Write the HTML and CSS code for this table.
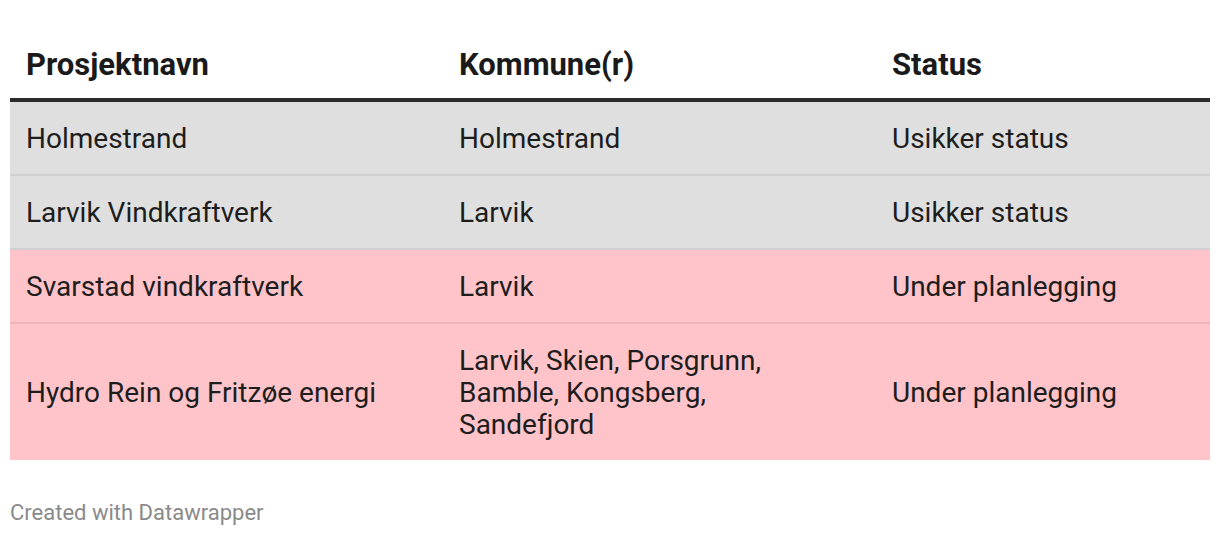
FILE: index.html
```html
<!DOCTYPE html>
<html lang="no">
<head>
<meta charset="utf-8">
<title>Vindkraftprosjekter</title>
<link rel="stylesheet" href="styles.css">
</head>
<body>
<div class="chart">
  <table class="dw-table">
    <colgroup>
      <col class="c1"><col class="c2"><col class="c3">
    </colgroup>
    <thead>
      <tr><th>Prosjektnavn</th><th>Kommune(r)</th><th>Status</th></tr>
    </thead>
    <tbody>
      <tr class="gray"><td>Holmestrand</td><td>Holmestrand</td><td>Usikker status</td></tr>
      <tr class="gray"><td>Larvik Vindkraftverk</td><td>Larvik</td><td>Usikker status</td></tr>
      <tr class="pink"><td>Svarstad vindkraftverk</td><td>Larvik</td><td>Under planlegging</td></tr>
      <tr class="pink last"><td>Hydro Rein og Fritzøe energi</td><td class="narrow">Larvik, Skien, Porsgrunn, Bamble, Kongsberg, Sandefjord</td><td>Under planlegging</td></tr>
    </tbody>
  </table>
  <div class="footer">Created with Datawrapper</div>
</div>
</body>
</html>
```
FILE: styles.css
```css
html, body {
  margin: 0;
  padding: 0;
  background: #ffffff;
}
body {
  font-family: Roboto, "Liberation Sans", sans-serif;
  color: #1d1d1d;
}
.chart {
  padding: 28px 10px 0 10px;
}
.dw-table {
  width: 1200px;
  border-collapse: collapse;
  table-layout: fixed;
  font-size: 28px;
  line-height: 32px;
}
.c1 { width: 433px; }
.c2 { width: 433px; }
.c3 { width: 334px; }
.dw-table th {
  text-align: left;
  font-weight: 700;
  font-size: 31px;
  line-height: 32px;
  padding: 21px 16px 17px 16px;
  border-bottom: 4px solid #2b2b2b;
  color: #1a1a1a;
}
.dw-table td {
  padding: 21px 16px 19px 16px;
  vertical-align: middle;
}
.dw-table td.narrow {
  padding-right: 60px;
}
.dw-table tr.gray td {
  background: #dfdfdf;
  border-bottom: 2px solid #d0d0d0;
}
.dw-table tr.pink td {
  background: #ffc4c9;
  border-bottom: 2px solid #f0b4b9;
}
.dw-table tr.last td {
  border-bottom: none;
}
.footer {
  margin-top: 40px;
  font-size: 22px;
  line-height: 26px;
  color: #8a8a8a;
}
```
